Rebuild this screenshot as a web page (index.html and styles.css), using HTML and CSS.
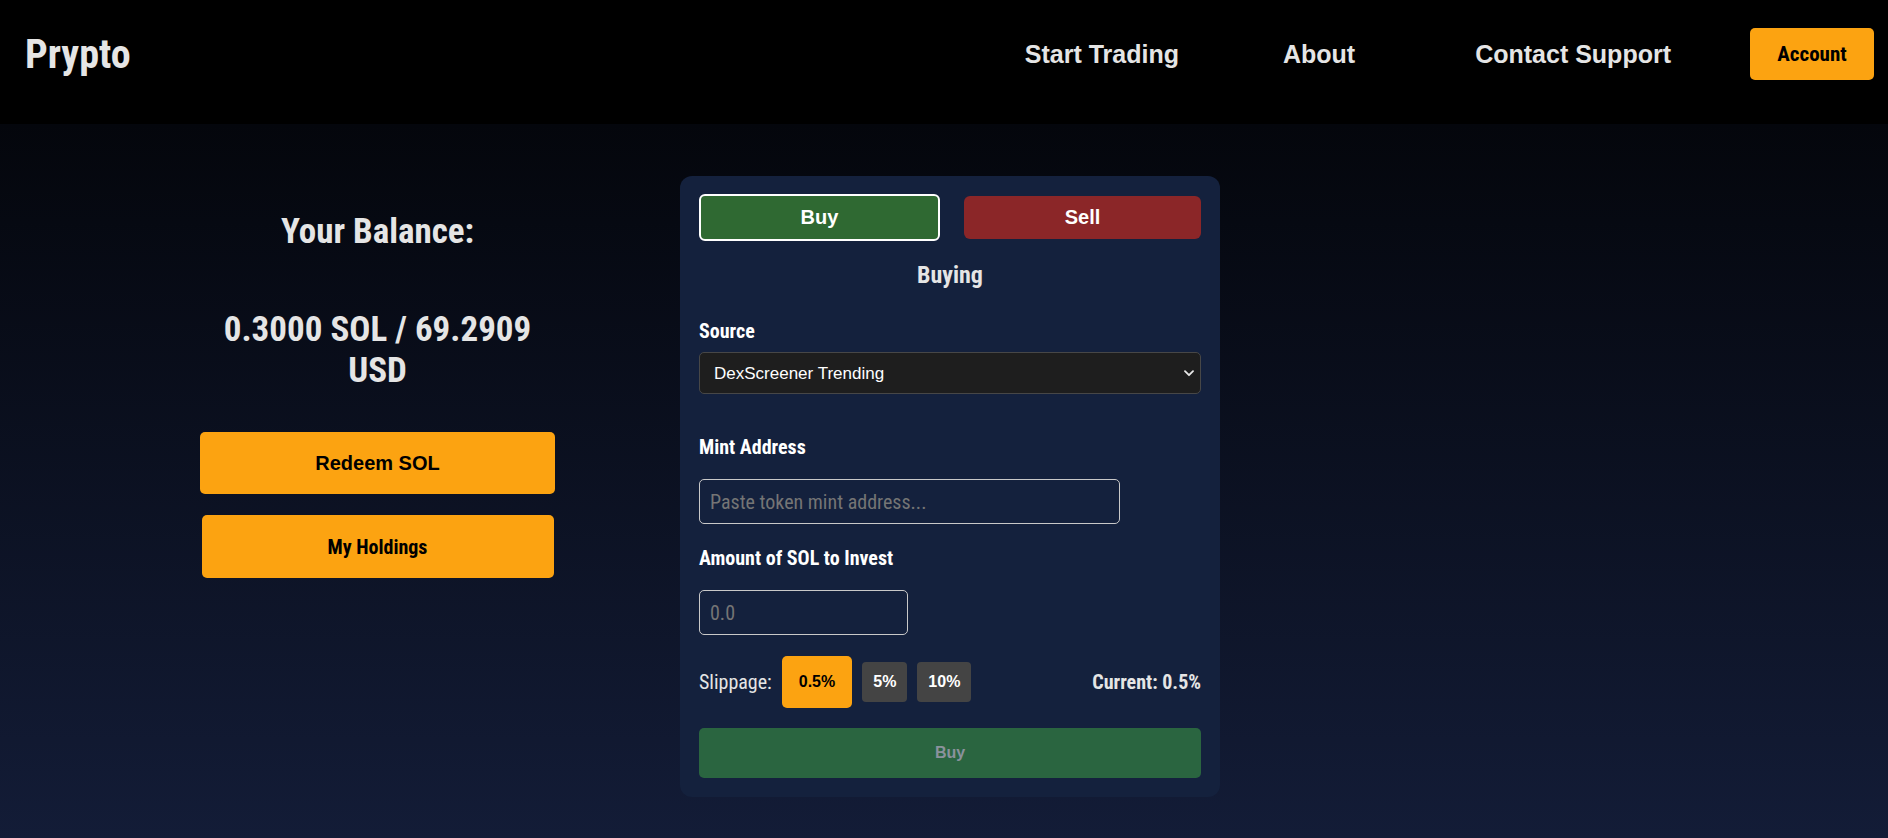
FILE: index.html
```html
<!DOCTYPE html>
<html lang="en">
<head>
<meta charset="utf-8">
<title>Prypto</title>
<link rel="stylesheet" href="styles.css">
</head>
<body>
<header class="topbar">
  <div class="logo">Prypto</div>
  <nav class="nav">
    <a class="nav-link nav-trade" href="#">Start Trading</a>
    <a class="nav-link nav-about" href="#">About</a>
    <a class="nav-link nav-contact" href="#">Contact Support</a>
    <button class="account-btn">Account</button>
  </nav>
</header>
<main class="main">
  <section class="balance-panel">
    <h2 class="balance-title">Your Balance:</h2>
    <p class="balance-amount">0.3000 SOL / 69.2909 USD</p>
    <button class="btn-redeem">Redeem SOL</button>
    <button class="btn-holdings">My Holdings</button>
  </section>
  <section class="trade-card">
    <div class="tabs">
      <button class="tab tab-buy">Buy</button>
      <button class="tab tab-sell">Sell</button>
    </div>
    <h3 class="mode-title">Buying</h3>
    <label class="field-label label-source">Source</label>
    <div class="select-wrap">
      <select class="source-select">
        <option>DexScreener Trending</option>
      </select>
      <svg class="chevron" width="10" height="7" viewBox="0 0 10 7"><path d="M1 1.2 L5 5.2 L9 1.2" fill="none" stroke="#e8e8e8" stroke-width="1.8" stroke-linecap="round" stroke-linejoin="round"/></svg>
    </div>
    <label class="field-label label-mint">Mint Address</label>
    <input class="text-input mint-input" type="text" placeholder="Paste token mint address...">
    <label class="field-label label-amount">Amount of SOL to Invest</label>
    <input class="text-input amount-input" type="text" placeholder="0.0">
    <div class="slippage-row">
      <span class="slip-label">Slippage:</span>
      <button class="slip-btn slip-active">0.5%</button>
      <button class="slip-btn">5%</button>
      <button class="slip-btn">10%</button>
      <span class="slip-current">Current: 0.5%</span>
    </div>
    <button class="submit-btn">Buy</button>
  </section>
</main>
</body>
</html>
```

FILE: styles.css
```css
* { box-sizing: border-box; }

html, body {
  margin: 0;
  height: 100%;
}

body {
  font-family: "Roboto Condensed", "Liberation Sans Narrow", Roboto, sans-serif;
  background: #000;
  color: #e5e5e5;
  overflow: hidden;
}

.topbar {
  height: 124px;
  background: #000;
  display: flex;
  align-items: center;
  padding: 0 14px 16px 25px;
}

.logo {
  font-size: 40px;
  font-weight: 700;
  color: #e5e5e5;
}

.nav {
  margin-left: auto;
  display: flex;
  align-items: center;
}

.nav-link {
  font-family: "Liberation Sans", Arial, sans-serif;
  font-size: 25px;
  font-weight: 700;
  color: #e5e5e5;
  text-decoration: none;
}

.nav-trade { margin-right: 104px; }
.nav-about { margin-right: 120px; }
.nav-contact { margin-right: 79px; }

.account-btn {
  width: 124px;
  height: 52px;
  border: none;
  border-radius: 5px;
  background: #fca311;
  color: #000;
  font-family: "Roboto Condensed", "Liberation Sans Narrow", Roboto, sans-serif;
  font-size: 21px;
  font-weight: 700;
}

.main {
  display: flex;
  align-items: flex-start;
  min-height: 714px;
  padding: 52px 0 0 200px;
  background: linear-gradient(180deg, #04060c 0%, #131c37 100%);
}

.balance-panel {
  width: 355px;
  display: flex;
  flex-direction: column;
  align-items: center;
  text-align: center;
}

.balance-title {
  margin: 36px 0 0;
  font-size: 35px;
  line-height: 40px;
  font-weight: 700;
  color: #e5e5e5;
}

.balance-amount {
  margin: 57px 0 0;
  font-size: 35px;
  line-height: 41px;
  font-weight: 700;
  color: #e5e5e5;
}

.btn-redeem,
.btn-holdings {
  border: none;
  border-radius: 5px;
  background: #fca311;
  color: #000;
  font-size: 20px;
  font-weight: 700;
}

.btn-redeem {
  margin-top: 41px;
  width: 355px;
  height: 62px;
  font-family: "Liberation Sans", Arial, sans-serif;
}

.btn-holdings {
  margin-top: 21px;
  width: 352px;
  height: 63px;
  font-family: "Roboto Condensed", "Liberation Sans Narrow", Roboto, sans-serif;
}

.trade-card {
  margin-left: 125px;
  width: 540px;
  padding: 18px 19px 19px;
  background: #14213d;
  border-radius: 12px;
  display: flex;
  flex-direction: column;
}

.tabs {
  display: flex;
  align-items: center;
  gap: 24px;
  height: 47px;
}

.tab {
  flex: 1;
  height: 43px;
  border: none;
  border-radius: 6px;
  color: #fff;
  font-family: "Liberation Sans", Arial, sans-serif;
  font-size: 20px;
  font-weight: 700;
}

.tab-buy {
  height: 47px;
  background: #2f6932;
  border: 2px solid #fff;
}

.tab-sell {
  background: #8b2628;
}

.mode-title {
  margin: 20px 0 0;
  font-size: 24px;
  font-weight: 700;
  text-align: center;
  color: #e5e5e5;
}

.field-label {
  display: block;
  font-size: 20px;
  font-weight: 700;
  color: #fff;
}

.label-source { margin-top: 30px; }
.label-mint { margin-top: 41px; }
.label-amount { margin-top: 22px; }

.select-wrap {
  position: relative;
  margin-top: 9px;
  height: 42px;
}

.source-select {
  appearance: none;
  -webkit-appearance: none;
  width: 100%;
  height: 42px;
  background: #1e1e1e;
  border: 1px solid #474747;
  border-radius: 5px;
  color: #fff;
  font-family: "Liberation Sans", Arial, sans-serif;
  font-size: 17px;
  padding: 0 14px;
}

.chevron {
  position: absolute;
  right: 7px;
  top: 18px;
}

.text-input {
  height: 45px;
  background: transparent;
  border: 1px solid #c9c9c9;
  border-radius: 5px;
  padding: 0 10px;
  color: #fff;
  font-family: "Roboto Condensed", "Liberation Sans Narrow", Roboto, sans-serif;
  font-size: 20px;
}

.text-input::placeholder {
  color: #757575;
}

.mint-input {
  margin-top: 20px;
  width: 421px;
}

.amount-input {
  margin-top: 20px;
  width: 209px;
}

.slippage-row {
  margin-top: 21px;
  display: flex;
  align-items: center;
  gap: 10px;
  height: 52px;
}

.slip-label {
  font-size: 20px;
  color: #e5e5e5;
}

.slip-btn {
  border: none;
  border-radius: 4px;
  background: #444;
  color: #fff;
  font-family: "Liberation Sans", Arial, sans-serif;
  font-size: 16px;
  font-weight: 700;
  line-height: 18px;
  padding: 11px 11px;
}

.slip-active {
  background: #fca311;
  color: #000;
  padding: 17px 17px;
  border-radius: 5px;
}

.slip-current {
  margin-left: auto;
  font-size: 20px;
  font-weight: 700;
  color: #e5e5e5;
}

.submit-btn {
  margin-top: 20px;
  width: 100%;
  height: 50px;
  border: none;
  border-radius: 5px;
  background: #2a6540;
  color: #8a929c;
  font-family: "Liberation Sans", Arial, sans-serif;
  font-size: 16px;
  font-weight: 700;
}
```
